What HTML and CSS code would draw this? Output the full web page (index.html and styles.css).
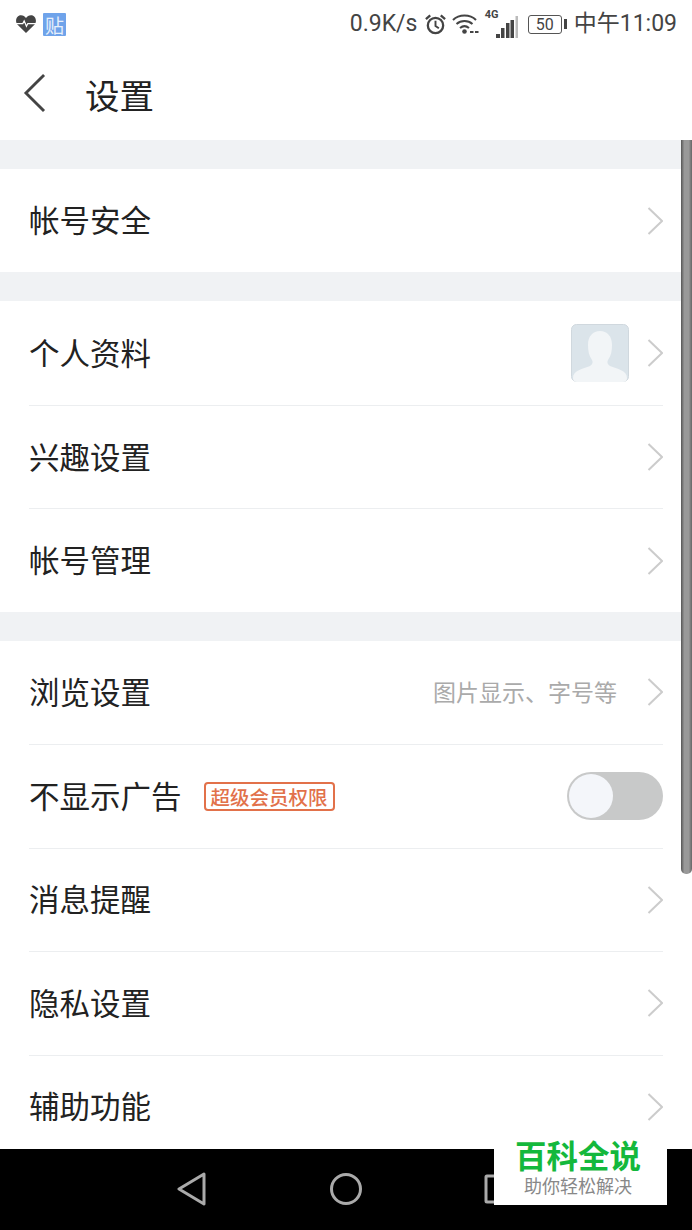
FILE: index.html
```html
<!DOCTYPE html>
<html lang="zh">
<head>
<meta charset="utf-8">
<title>设置</title>
<link rel="stylesheet" href="styles.css">
</head>
<body>
<div class="page">
  <div class="status">
    <div class="status-left">
      <svg class="ic-heart" viewBox="0 0 24 22"><path d="M12 21 2.500 11.500C-.5 8 1.500 1.500 6.500 1.500c2.500 0 4.300 1.300 5.500 3 1.200-1.700 3-3 5.500-3 5 0 7 6.500 4 10z" fill="#444"/><path d="M1 10.500h7.500l1.500-3 2.500 6 1.500-3h9" fill="none" stroke="#fff" stroke-width="1.300"/></svg>
      <span class="tie">贴</span>
    </div>
    <div class="status-right">
      <span class="speed">0.9K/s</span>
      <svg class="ic-alarm" viewBox="0 0 24 24" fill="none" stroke="#444"><circle cx="12" cy="13" r="8" stroke-width="2.400"/><path d="M12 8v5.500l3.500 2.500" stroke-width="2"/><path d="M2 6.500 6.500 2.500M22 6.500l-4.500-4" stroke-width="2.400"/></svg>
      <svg class="ic-wifi" viewBox="0 0 27 22" fill="none" stroke="#444" stroke-width="2"><path d="M1 7C7 1 18 1 24 7"/><path d="M4.500 11c4.500-4 11.500-4 16 0"/><path d="M8 15c3-2.500 6-2.500 9 0"/><circle cx="12.500" cy="18.500" r="2.300" fill="#444" stroke="none"/><path d="M18 19h3.500M23 19h3.500" stroke-width="2"/></svg>
      <span class="signal">
        <span class="net">4G</span>
        <svg class="ic-bars" viewBox="0 0 22 22"><path d="M0 18h4v4H0zM5 12h3.500v10H5zM10 7h3.500v15H10zM14.500 4H18v18h-3.500z" fill="#444"/><path d="M19.500 0H22v22h-2.500z" fill="#bbb"/></svg>
      </span>
      <span class="battery"><span class="battery-body">50</span><span class="battery-tip"></span></span>
      <span class="clock">中午11:09</span>
    </div>
  </div>

  <header class="head">
    <svg class="ic-back" viewBox="0 0 24 42" fill="none" stroke="#444" stroke-width="3"><path d="M22 2 3 21l19 19"/></svg>
    <h1 class="title">设置</h1>
  </header>

  <main class="list">
    <section class="group">
      <div class="row"><span class="label">帐号安全</span><svg class="chev" viewBox="0 0 16 28"><path d="M1.500 1 15 14 1.500 27"/></svg></div>
    </section>
    <section class="group">
      <div class="row"><span class="label">个人资料</span>
        <svg class="avatar" viewBox="0 0 58 58"><rect x=".5" y=".5" width="57" height="57" rx="5" fill="#dbe4ea" stroke="#d0d8de"/><path d="M2 54c0-8 10-9 17-12 3-2 3-4 2-6-3-4-4-9-4-15C17 12 22 7 29 7s12 5 12 14c0 6-1 11-4 15-1 2-1 4 2 6 7 3 17 4 17 12 0 2-1 4-4 4H6c-3 0-4-2-4-4z" fill="#f2f5f7"/></svg>
        <svg class="chev" viewBox="0 0 16 28"><path d="M1.500 1 15 14 1.500 27"/></svg></div>
      <div class="row"><span class="label">兴趣设置</span><svg class="chev" viewBox="0 0 16 28"><path d="M1.500 1 15 14 1.500 27"/></svg></div>
      <div class="row"><span class="label">帐号管理</span><svg class="chev" viewBox="0 0 16 28"><path d="M1.500 1 15 14 1.500 27"/></svg></div>
    </section>
    <section class="group">
      <div class="row"><span class="label">浏览设置</span><span class="hint">图片显示、字号等</span><svg class="chev" viewBox="0 0 16 28"><path d="M1.500 1 15 14 1.500 27"/></svg></div>
      <div class="row"><span class="label">不显示广告</span><span class="tag">超级会员权限</span><span class="toggle"><span class="knob"></span></span></div>
      <div class="row"><span class="label">消息提醒</span><svg class="chev" viewBox="0 0 16 28"><path d="M1.500 1 15 14 1.500 27"/></svg></div>
      <div class="row"><span class="label">隐私设置</span><svg class="chev" viewBox="0 0 16 28"><path d="M1.500 1 15 14 1.500 27"/></svg></div>
      <div class="row"><span class="label">辅助功能</span><svg class="chev" viewBox="0 0 16 28"><path d="M1.500 1 15 14 1.500 27"/></svg></div>
    </section>
    <div class="scrollbar"></div>
  </main>

  <nav class="nav">
    <svg class="nav-back" viewBox="0 0 30 34" fill="none" stroke="#aaa" stroke-width="3" stroke-linejoin="round"><path d="M27 2 2 17l25 15z"/></svg>
    <svg class="nav-home" viewBox="0 0 32 32" fill="none" stroke="#aaa" stroke-width="3"><circle cx="16" cy="16" r="14.500"/></svg>
    <svg class="nav-recent" viewBox="0 0 30 30" fill="none" stroke="#aaa" stroke-width="3" stroke-linejoin="round"><rect x="2" y="2" width="26" height="26" rx="1"/></svg>
    <div class="mark">
      <span class="mark-title">百科全说</span>
      <span class="mark-sub">助你轻松解决</span>
    </div>
  </nav>
</div>
</body>
</html>
```

FILE: styles.css
```css
* { box-sizing: border-box; }
html, body { margin: 0; padding: 0; }
body {
  font-family: "Noto Sans CJK SC", "Noto Sans", sans-serif;
  color: #222;
  background: #fff;
}
.page {
  width: 692px;
  height: 1230px;
  display: flex;
  flex-direction: column;
  overflow: hidden;
}
.status {
  height: 48px;
  flex: none;
  display: flex;
  align-items: center;
  justify-content: space-between;
  padding: 0 15px 0 15px;
  color: #444;
}
.status-left { display: flex; align-items: center; gap: 6px; }
.ic-heart { width: 22px; height: 20px; display: block; }
.tie {
  width: 23px;
  height: 23px;
  background: #6fa3ea;
  color: #e8f0fb;
  font-size: 19px;
  line-height: 23px;
  text-align: center;
  border-radius: 1px;
}
.status-right { display: flex; align-items: center; }
.speed, .clock { font-family: Roboto, "Noto Sans CJK SC", sans-serif; font-size: 23px; line-height: 48px; }
.speed { width: 74px; }
.ic-alarm { width: 23px; height: 23px; display: block; margin-right: 5px; }
.ic-wifi { width: 27px; height: 22px; display: block; }
.signal { position: relative; width: 39px; height: 30px; display: flex; align-items: flex-end; justify-content: flex-end; }
.net { position: absolute; left: 6px; top: 0; font-family: Roboto, sans-serif; font-weight: 700; font-size: 11px; line-height: 12px; }
.ic-bars { width: 22px; height: 22px; display: block; margin-bottom: 1px; }
.battery { display: flex; align-items: center; margin-left: 10px; gap: 2px; }
.battery-body {
  width: 34px;
  height: 19px;
  border: 1px solid #555;
  border-radius: 3px;
  font-family: Roboto, sans-serif;
  font-size: 16px;
  line-height: 17px;
  text-align: center;
}
.battery-tip { width: 3px; height: 10px; background: #444; }
.clock { margin-left: 7px; }

.head {
  height: 92px;
  flex: none;
  display: flex;
  align-items: center;
  padding: 0 0 2px 23px;
}
.ic-back { width: 23px; height: 40px; display: block; }
.title { margin: 2px 0 0 39px; font-size: 34.500px; font-weight: 400; line-height: 44px; color: #222; }

.list {
  position: relative;
  flex: 1;
  min-height: 0;
  overflow: hidden;
  background: #f0f2f4;
  padding-top: 29px;
  display: flex;
  flex-direction: column;
  gap: 29px;
}
.group { background: #fff; flex: none; padding: 0 29px 0 29px; }
.row {
  height: 103.450px;
  display: flex;
  align-items: center;
  border-top: 1px solid #eceef0;
}
.row:first-child { border-top: 0; }
.label { font-size: 30.500px; line-height: 40px; color: #222; margin-top: -3px; }
.chev {
  width: 16px;
  height: 28px;
  flex: none;
  margin-left: auto;
  fill: none;
  stroke: #ccc;
  stroke-width: 2;
}
.avatar { width: 58px; height: 58px; margin-left: auto; flex: none; display: block; }
.avatar + .chev { margin-left: 18px; }
.hint { margin-left: auto; font-size: 23px; line-height: 30px; color: #aaa; margin-top: -2px; }
.hint + .chev { margin-left: 30px; }
.tag {
  margin-left: 22px;
  width: 131px;
  height: 29px;
  border: 2px solid #e2714a;
  border-radius: 4px;
  color: #e2714a;
  font-size: 19.500px;
  font-weight: 500;
  line-height: 25px;
  text-align: center;
  white-space: nowrap;
}
.toggle {
  margin-left: auto;
  width: 96px;
  height: 48px;
  border-radius: 24px;
  background: #c8c9c9;
  padding: 2px;
  flex: none;
}
.knob { display: block; width: 44px; height: 44px; border-radius: 50%; background: #f4f6fa; }
.scrollbar {
  position: absolute;
  right: 0;
  top: 0;
  width: 11px;
  height: 734px;
  background: linear-gradient(90deg, #555 0, #999 30%, #999 70%, #666 100%);
  border-radius: 0 0 5px 5px;
}

.nav {
  position: relative;
  height: 81px;
  flex: none;
  background: #000;
  display: flex;
  align-items: center;
  padding-top: 1px;
}
.nav-back { position: absolute; left: 177px; top: 23px; width: 30px; height: 34px; }
.nav-home { position: absolute; left: 330px; top: 24px; width: 32px; height: 32px; }
.nav-recent { position: absolute; left: 484px; top: 25px; width: 30px; height: 30px; }
.mark {
  position: absolute;
  left: 494px;
  top: -10px;
  width: 173px;
  height: 66px;
  background: #fff;
  padding-right: 5px;
  display: flex;
  flex-direction: column;
  align-items: center;
}
.mark-title { font-size: 31.500px; font-weight: 700; line-height: 30px; color: #14b83c; white-space: nowrap; }
.mark-sub { font-size: 18px; line-height: 22px; margin-top: 5px; color: #888; white-space: nowrap; }
```
